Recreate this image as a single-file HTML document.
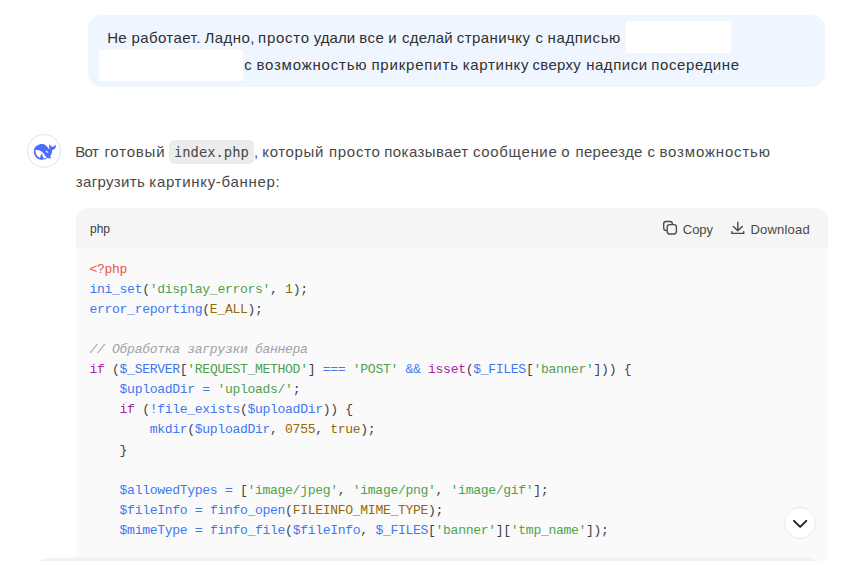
<!DOCTYPE html>
<html lang="ru">
<head>
<meta charset="utf-8">
<title>DeepSeek</title>
<style>
html,body{margin:0;padding:0;}
body{width:841px;height:561px;overflow:hidden;background:#fff;position:relative;font-family:"Liberation Sans",sans-serif;color:#262626;}
.abs{position:absolute;}
.bubble{left:88px;top:15px;width:737px;height:72px;background:#eff6ff;border-radius:14px;}
.w{font-size:15px;line-height:20px;white-space:nowrap;}
.u{color:#303030;}
.a{color:#484848;}
.red{background:#fff;}
.avatar{left:27.2px;top:134px;width:33.500px;height:33.500px;border:1px solid #d5e4ff;border-radius:50%;box-sizing:border-box;background:#fff;}
.icodebox{left:169.3px;top:140px;width:84.7px;height:24px;background:#ececec;border-radius:5px;}
.icode{left:174px;top:142px;font-family:"DejaVu Sans Mono","Liberation Mono",monospace;font-size:13.800px;line-height:20px;color:#484848;white-space:nowrap;}
.cb{left:76px;top:208px;width:752px;height:360px;background:#fafafa;border-radius:12px;overflow:hidden;}
.cbh{left:0;top:0;width:752px;height:40px;background:#f5f5f5;}
.lang{left:14px;top:12px;font-size:12px;line-height:18px;color:#404040;}
.btn{font-size:13px;line-height:18px;color:#484848;top:13px;white-space:nowrap;}
pre{margin:0;left:13.5px;top:51.860px;font-family:"Liberation Mono",monospace;font-size:13.100px;letter-spacing:-0.336px;line-height:20.08px;color:#40424a;}
.k{color:#a626a4}.s{color:#50a14f}.n{color:#986801}.f{color:#4078f2}.c{color:#a0a1a7;font-style:italic}.m{color:#e45649}
.inputbox{left:27px;top:558.700px;width:801px;height:60px;border-radius:24px;background:#eef0f4;box-shadow:0 0 3px rgba(0,0,0,.10);}
.scroll{left:784px;top:506.700px;width:32px;height:32px;border-radius:50%;background:#fff;box-sizing:border-box;border:1px solid #ebebeb;}
</style>
</head>
<body>
<div class="abs bubble"></div>
<span class="abs w u" style="left:107.3px;top:27.8px">Не </span>
<span class="abs w u" style="left:131.4px;top:27.8px;letter-spacing:0.42px">работает. </span>
<span class="abs w u" style="left:204.5px;top:27.8px;letter-spacing:0.46px">Ладно, </span>
<span class="abs w u" style="left:258.1px;top:27.8px;letter-spacing:0.72px">просто </span>
<span class="abs w u" style="left:313.7px;top:27.8px;letter-spacing:0.05px">удали </span>
<span class="abs w u" style="left:359.3px;top:27.8px;letter-spacing:0.45px">все </span>
<span class="abs w u" style="left:388.3px;top:27.8px">и </span>
<span class="abs w u" style="left:402.0px;top:27.8px;letter-spacing:0.22px">сделай </span>
<span class="abs w u" style="left:456.8px;top:27.8px;letter-spacing:0.42px">страничку </span>
<span class="abs w u" style="left:535.5px;top:27.8px">с </span>
<span class="abs w u" style="left:547.6px;top:27.8px;letter-spacing:0.61px">надписью </span>
<span class="abs w u" style="left:244.2px;top:55.4px">с </span>
<span class="abs w u" style="left:256.4px;top:55.4px;letter-spacing:0.79px">возможностью </span>
<span class="abs w u" style="left:371.4px;top:55.4px;letter-spacing:0.81px">прикрепить </span>
<span class="abs w u" style="left:462.8px;top:55.4px;letter-spacing:0.67px">картинку </span>
<span class="abs w u" style="left:532.6px;top:55.4px;letter-spacing:0.28px">сверху </span>
<span class="abs w u" style="left:586.2px;top:55.4px;letter-spacing:0.53px">надписи </span>
<span class="abs w u" style="left:651.3px;top:55.4px;letter-spacing:0.59px">посередине </span>
<div class="abs red" style="left:625.8px;top:21px;width:105.2px;height:31.8px"></div>
<div class="abs red" style="left:99px;top:50px;width:143.5px;height:30.8px"></div>

<div class="abs avatar"></div>
<svg class="abs" style="left:24px;top:131px" width="40" height="40" viewBox="0 0 561 561">
<path fill="#4d6bfe" d="M138 285 C138 240 165 200 215 188 C250 179 284 183 306 204 C322 219 338 238 354 258 C353 230 350 202 353 176 C362 200 375 214 392 220 C412 222 432 212 448 194 C452 222 440 248 418 260 C410 264 402 266 396 266 C394 300 384 335 366 358 C372 366 378 372 386 380 C366 386 350 384 336 376 C312 394 280 405 245 404 C185 401 138 350 138 285 Z"/>
<path fill="#fff" d="M161 270 C200 255 258 282 288 332 C298 350 310 366 322 376 C305 384 285 384 272 378 C266 360 258 338 249 314 C238 335 228 355 226 378 C190 362 158 325 161 270 Z"/>
<path fill="#fff" d="M302 272 C316 270 332 282 340 298 C342 306 338 310 332 310 C316 306 304 292 302 272 Z"/>
<circle cx="325" cy="296" r="7" fill="#4d6bfe"/>
</svg>
<span class="abs w a" style="left:75.2px;top:141.6px;letter-spacing:-0.65px">Вот </span>
<span class="abs w a" style="left:104.4px;top:141.6px;letter-spacing:0.80px">готовый </span>
<div class="abs icodebox"></div>
<code class="abs icode">index.php</code>
<span class="abs w a" style="left:254.0px;top:141.6px">, </span>
<span class="abs w a" style="left:262.3px;top:141.6px;letter-spacing:0.62px">который </span>
<span class="abs w a" style="left:328.9px;top:141.6px;letter-spacing:0.74px">просто </span>
<span class="abs w a" style="left:384.3px;top:141.6px;letter-spacing:0.41px">показывает </span>
<span class="abs w a" style="left:473.0px;top:141.6px;letter-spacing:0.66px">сообщение </span>
<span class="abs w a" style="left:561.2px;top:141.6px">о </span>
<span class="abs w a" style="left:575.5px;top:141.6px;letter-spacing:0.29px">переезде </span>
<span class="abs w a" style="left:647.4px;top:141.6px">с </span>
<span class="abs w a" style="left:659.5px;top:141.6px;letter-spacing:0.82px">возможностью </span>
<span class="abs w a" style="left:75.8px;top:171.5px;letter-spacing:0.34px">загрузить </span>
<span class="abs w a" style="left:149.3px;top:171.5px;letter-spacing:0.69px">картинку-баннер: </span>

<div class="abs cb">
<div class="abs cbh"></div>
<div class="abs lang">php</div>
<svg class="abs" style="left:584px;top:10px" width="20" height="20" viewBox="660 218 20 20" fill="none" stroke="#4a4a4a" stroke-width="1.350" stroke-linecap="round" stroke-linejoin="round">
<path d="M666.600 230.300 H665.900 A2.200 2.200 0 0 1 663.700 228.100 V223.700 A2.200 2.200 0 0 1 665.900 221.500 H670.100 A2.200 2.200 0 0 1 672.300 223.700 V224.200"/>
<rect x="667.200" y="224.600" width="9.200" height="9.400" rx="2.400"/>
</svg>
<svg class="abs" style="left:652px;top:10px" width="20" height="20" viewBox="728 218 20 20" fill="none" stroke="#4a4a4a" stroke-width="1.400" stroke-linecap="round" stroke-linejoin="round">
<path d="M737.800 222.200 V230.500 M733.400 226.400 L737.800 230.800 L742.200 226.400 M731.900 231.600 V233.400 H743.700 V231.600"/>
</svg>
<div class="abs btn" style="left:606.800px;letter-spacing:-0.05px">Copy</div>
<div class="abs btn" style="left:674.400px;letter-spacing:0.22px">Download</div>
<pre class="abs"><span class="m">&lt;?php</span>
<span class="f">ini_set</span>(<span class="s">'display_errors'</span>, <span class="n">1</span>);
<span class="f">error_reporting</span>(<span class="n">E_ALL</span>);

<span class="c">// Обработка загрузки баннера</span>
<span class="k">if</span> (<span class="f">$_SERVER</span>[<span class="s">'REQUEST_METHOD'</span>] <span class="f">===</span> <span class="s">'POST'</span> <span class="f">&amp;&amp;</span> <span class="k">isset</span>(<span class="f">$_FILES</span>[<span class="s">'banner'</span>])) {
    <span class="f">$uploadDir</span> <span class="f">=</span> <span class="s">'uploads/'</span>;
    <span class="k">if</span> (<span class="f">!file_exists</span>(<span class="f">$uploadDir</span>)) {
        <span class="f">mkdir</span>(<span class="f">$uploadDir</span>, <span class="n">0755</span>, <span class="n">true</span>);
    }

    <span class="f">$allowedTypes</span> <span class="f">=</span> [<span class="s">'image/jpeg'</span>, <span class="s">'image/png'</span>, <span class="s">'image/gif'</span>];
    <span class="f">$fileInfo</span> <span class="f">=</span> <span class="f">finfo_open</span>(<span class="n">FILEINFO_MIME_TYPE</span>);
    <span class="f">$mimeType</span> <span class="f">=</span> <span class="f">finfo_file</span>(<span class="f">$fileInfo</span>, <span class="f">$_FILES</span>[<span class="s">'banner'</span>][<span class="s">'tmp_name'</span>]);
</pre>
</div>
<div class="abs inputbox"></div>
<div class="abs scroll"></div>
<svg class="abs" style="left:790px;top:513px" width="20" height="20" viewBox="790 513 20 20"><path d="M794 520.900 L800.150 526.900 L806.300 520.900" fill="none" stroke="#262626" stroke-width="2" stroke-linecap="round" stroke-linejoin="round"/></svg>
</body>
</html>
